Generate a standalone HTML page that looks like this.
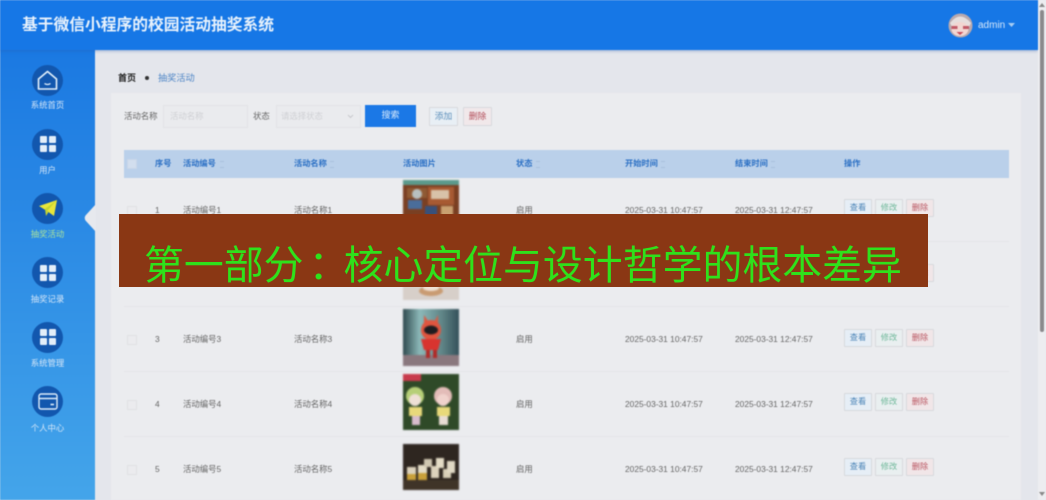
<!DOCTYPE html>
<html lang="zh-CN"><head><meta charset="utf-8"><title>抽奖活动</title>
<style>
html,body{margin:0;padding:0;width:1046px;height:500px;overflow:hidden;background:#e4e6ec}
body{position:relative;font-family:"Liberation Sans","Noto Sans CJK SC",sans-serif;font-size:8.4px;color:#666}
#wrap div,#wrap svg{position:absolute;white-space:nowrap}
#wrap{position:absolute;left:0;top:0;width:1046px;height:500px}
.soft{position:absolute;left:0;top:0;width:1046px;height:500px;filter:blur(.5px)}
.ci{left:32px;width:31px;height:31px;border-radius:50%;background:#1257ae}
.sl{left:0;width:95px;text-align:center;color:#d4e6f8;font-size:8.4px;line-height:12px}
.th{top:158px;color:#2a6fc4;font-weight:bold;font-size:8.2px;line-height:12px}
.t{line-height:12px;color:#666}
.cb{left:127px;width:8px;height:8px;border:1px solid #e0e1e4;background:#ebebee}
.b{width:26px;height:16px;line-height:16px;border:1px solid #d8d9dd;text-align:center;font-size:8.2px;border-radius:1px}
.v{left:844px;color:#4d86b8;background:#e6eef6}.e{left:875px;color:#6fb89a;background:#e9eff0}.d{left:906px;color:#b8525e;background:#f1e6e8}
.ln{left:124px;width:885px;height:1px;background:#e4e5e8}
.sort{width:4px;height:7px;border-top:1px solid #a9c0dc;border-bottom:1px solid #a9c0dc;box-sizing:border-box}
.im{filter:blur(.8px)}
</style></head><body><div id="wrap"><div class="soft">
<div style="left:95px;top:50px;width:951px;height:450px;background:#e4e6ec"></div>
<div style="left:0;top:50px;width:95px;height:450px;background:linear-gradient(#1b79e2,#44a5ea)"></div>
<div style="left:0;top:0;width:1038px;height:50px;background:#1677e6;box-shadow:0 1px 3px rgba(40,90,170,.4)"></div>
<div style="left:22px;top:14.500px;font-size:15.75px;line-height:22px;font-weight:bold;color:#e8f2fc">基于微信小程序的校园活动抽奖系统</div>
<svg style="left:948px;top:13px" width="25" height="25" viewBox="0 0 25 25"><circle cx="12.5" cy="12.5" r="12" fill="#b9a9ae"/><path d="M2 10Q12-3 23 10L21 14H4Z" fill="#e6dedd"/><ellipse cx="12" cy="16" rx="8.500" ry="7" fill="#f2d6d2"/><rect x="3.500" y="13" width="6" height="3" fill="#c25a68"/><rect x="15" y="13" width="6" height="3" fill="#c25a68"/><path d="M8.500 19h7l-3.500 3z" fill="#c84a58"/></svg>
<div style="left:978px;top:19px;font-size:10px;line-height:13px;color:#d5e7fa">admin</div>
<svg style="left:1008px;top:23px" width="7" height="5"><path d="M0 0H7L3.500 4Z" fill="#a8cdf2"/></svg>
<div style="left:1038px;top:0;width:8px;height:500px;background:#ededf0"></div>
<div style="left:1040px;top:10px;width:3.500px;height:322px;background:#8a8a8c;border-radius:2px"></div>
<svg style="left:1039px;top:3px" width="6" height="4"><path d="M3 0L6 4H0Z" fill="#888"/></svg>
<svg style="left:1039px;top:492px" width="6" height="4"><path d="M3 4L6 0H0Z" fill="#888"/></svg>

<div class="ci" style="top:65px"></div>
<svg style="left:37px;top:70px" width="21" height="21" viewBox="0 0 21 21" fill="none" stroke="#e3f1fc" stroke-width="1.600"><path d="M1.500 9L10.500 1.500 19.500 9V19H1.500Z" stroke-linejoin="round"/><path d="M7.500 13.500Q10.500 15.500 13.500 13.500" stroke-width="1.300"/></svg>
<div class="sl" style="top:99px">系统首页</div>
<div class="ci" style="top:129px"></div>
<svg style="left:40px;top:136px" width="16" height="16"><rect width="7" height="7" rx="1" fill="#e3eef9"/><rect x="9" width="7" height="7" rx="1" fill="#e3eef9"/><rect y="9" width="7" height="7" rx="1" fill="#e3eef9"/><rect x="9" y="9" width="7" height="7" rx="1" fill="#e3eef9"/></svg>
<div class="sl" style="top:164px">用户</div>
<div class="ci" style="top:193px"></div>
<svg style="left:38px;top:199px" width="20" height="19" viewBox="0 0 20 19"><path d="M1 7L19 1 16 17 9 12Z" fill="#e8e63a"/><path d="M9 12L19 1 7 10 8 17 10.500 13Z" fill="#c5d430"/></svg>
<div class="sl" style="top:228px;color:#a9e39c">抽奖活动</div>
<div class="ci" style="top:257px"></div>
<svg style="left:40px;top:265px" width="16" height="16"><rect width="7" height="7" rx="1" fill="#e3eef9"/><rect x="9" width="7" height="7" rx="1" fill="#e3eef9"/><rect y="9" width="7" height="7" rx="1" fill="#e3eef9"/><rect x="9" y="9" width="7" height="7" rx="1" fill="#e3eef9"/></svg>
<div class="sl" style="top:293px">抽奖记录</div>
<div class="ci" style="top:322px"></div>
<svg style="left:40px;top:329px" width="16" height="16"><rect width="7" height="7" rx="1" fill="#e3eef9"/><rect x="9" width="7" height="7" rx="1" fill="#e3eef9"/><rect y="9" width="7" height="7" rx="1" fill="#e3eef9"/><rect x="9" y="9" width="7" height="7" rx="1" fill="#e3eef9"/></svg>
<div class="sl" style="top:357px">系统管理</div>
<div class="ci" style="top:386px"></div>
<svg style="left:38px;top:393px" width="20" height="17" viewBox="0 0 20 17" fill="none" stroke="#dcecfa" stroke-width="1.400"><rect x="1" y="1" width="18" height="15" rx="2"/><path d="M1 5.500H19"/><path d="M12.500 11.500H16" stroke-width="1.600"/></svg>
<div class="sl" style="top:422px">个人中心</div>
<svg style="left:84px;top:204px" width="12" height="28"><path d="M12 0V28L1.500 16.500Q0 14 1.500 11.500Z" fill="#e7e9ee"/></svg>

<div style="left:118px;top:72px;font-size:9px;line-height:12px;font-weight:bold;color:#222">首页</div>
<div style="left:145px;top:76px;width:4px;height:4px;border-radius:50%;background:#333"></div>
<div style="left:158px;top:72px;font-size:9.2px;line-height:12px;color:#4f86c6">抽奖活动</div>

<div style="left:111px;top:93px;width:910px;height:407px;background:#ebecef"></div>
<div class="t" style="left:124px;top:110px">活动名称</div>
<div style="left:163px;top:105px;width:83px;height:21px;border:1px solid #e2e3e6;background:#eaebee"></div>
<div class="t" style="left:170px;top:110px;color:#cfd0d4">活动名称</div>
<div class="t" style="left:253px;top:110px">状态</div>
<div style="left:276px;top:105px;width:83px;height:21px;border:1px solid #e2e3e6;background:#eaebee"></div>
<div class="t" style="left:281px;top:110px;color:#cfd0d4">请选择状态</div>
<svg style="left:347px;top:114px" width="7" height="5" fill="none" stroke="#c8c9cd"><path d="M1 1L3.500 3.500 6 1"/></svg>
<div style="left:365px;top:105px;width:51px;height:22px;line-height:21px;text-align:center;background:#1b78e6;color:#d9ebfc;font-size:9px">搜索</div>
<div class="b" style="left:429px;top:107px;width:27px;height:17px;line-height:17px;font-size:8.800px;color:#5c8fbb;background:#e8eff5">添加</div>
<div class="b" style="left:463px;top:107px;width:27px;height:17px;line-height:17px;font-size:8.800px;color:#b4505c;background:#f1e8ea">删除</div>

<div style="left:124px;top:150px;width:885px;height:28px;background:#bad0ea"></div>
<div class="cb" style="top:159px;background:#d2deee;border-color:#c8d6e8"></div>
<div class="th" style="left:155px">序号</div>
<div class="th" style="left:183px">活动编号</div><div class="sort" style="left:220px;top:161px"></div>
<div class="th" style="left:294px">活动名称</div><div class="sort" style="left:330px;top:161px"></div>
<div class="th" style="left:403px">活动图片</div>
<div class="th" style="left:516px">状态</div><div class="sort" style="left:536px;top:161px"></div>
<div class="th" style="left:625px">开始时间</div><div class="sort" style="left:661px;top:161px"></div>
<div class="th" style="left:735px">结束时间</div><div class="sort" style="left:771px;top:161px"></div>
<div class="th" style="left:844px">操作</div>

<div class="ln" style="top:241px"></div><div class="ln" style="top:306px"></div><div class="ln" style="top:371px"></div><div class="ln" style="top:436px"></div>

<!-- row 1 -->
<div class="cb" style="top:206px"></div><div class="t" style="left:155px;top:204px">1</div><div class="t" style="left:183px;top:204px">活动编号1</div><div class="t" style="left:294px;top:204px">活动名称1</div>
<svg class="im" style="left:403px;top:180px" width="56" height="56" viewBox="0 0 56 56"><rect width="56" height="56" fill="#7a3f22"/><rect width="56" height="5" fill="#5b9a8c"/><rect x="4" y="8" width="20" height="10" fill="#8f5a34"/><circle cx="14" cy="14" r="5" fill="#b8c0c0"/><rect x="25" y="7" width="26" height="18" fill="#a75a32"/><rect x="28" y="10" width="18" height="9" fill="#d8c2a8"/><rect x="5" y="20" width="14" height="9" fill="#4a6d9a"/><rect x="22" y="26" width="12" height="12" fill="#38507a"/><rect x="38" y="26" width="12" height="10" fill="#c9a070"/></svg>
<div class="t" style="left:516px;top:204px">启用</div><div class="t" style="left:625px;top:204px">2025-03-31 10:47:57</div><div class="t" style="left:735px;top:204px">2025-03-31 12:47:57</div>
<div class="b v" style="top:199px">查看</div><div class="b e" style="top:199px">修改</div><div class="b d" style="top:199px">删除</div>

<!-- row 2 -->
<svg class="im" style="left:403px;top:244px" width="56" height="56" viewBox="0 0 56 56"><rect width="56" height="56" fill="#d7cfc9"/><ellipse cx="28" cy="47" rx="12" ry="5" fill="#c99b72"/><ellipse cx="28" cy="44" rx="8" ry="3" fill="#efe1d4"/></svg>
<div class="b v" style="top:264px">查看</div><div class="b e" style="top:264px">修改</div><div class="b d" style="top:264px">删除</div>

<!-- row 3 -->
<div class="cb" style="top:335px"></div><div class="t" style="left:155px;top:333px">3</div><div class="t" style="left:183px;top:333px">活动编号3</div><div class="t" style="left:294px;top:333px">活动名称3</div>
<svg class="im" style="left:403px;top:309px" width="56" height="57" viewBox="0 0 56 57"><defs><linearGradient id="g3" x1="0" y1="0" x2="1" y2="0"><stop offset="0" stop-color="#2f4a4e"/><stop offset=".3" stop-color="#8cb8b8"/><stop offset=".7" stop-color="#5f8486"/><stop offset="1" stop-color="#34505a"/></linearGradient></defs><rect width="56" height="57" fill="url(#g3)"/><rect y="46" width="56" height="11" fill="#8a787e"/><path d="M21 16L21 6 26 13H31L35 6 35 16Z" fill="#d85c44"/><circle cx="28" cy="21" r="10" fill="#e0553f"/><ellipse cx="28" cy="21" rx="7" ry="4.500" fill="#1e1c20"/><path d="M18 30H38L35 41H21Z" fill="#d8342f"/><rect x="23" y="41" width="4" height="8" fill="#b02a28"/><rect x="30" y="41" width="4" height="8" fill="#b02a28"/></svg>
<div class="t" style="left:516px;top:333px">启用</div><div class="t" style="left:625px;top:333px">2025-03-31 10:47:57</div><div class="t" style="left:735px;top:333px">2025-03-31 12:47:57</div>
<div class="b v" style="top:329px">查看</div><div class="b e" style="top:329px">修改</div><div class="b d" style="top:329px">删除</div>

<!-- row 4 -->
<div class="cb" style="top:400px"></div><div class="t" style="left:155px;top:398px">4</div><div class="t" style="left:183px;top:398px">活动编号4</div><div class="t" style="left:294px;top:398px">活动名称4</div>
<svg class="im" style="left:403px;top:374px" width="56" height="56" viewBox="0 0 56 56"><rect width="56" height="56" fill="#2f4a28"/><rect x="0" y="0" width="18" height="7" fill="#c83a4c"/><circle cx="12" cy="22" r="9" fill="#b6cf78"/><circle cx="40" cy="22" r="9" fill="#e3bcb8"/><ellipse cx="12" cy="26" rx="6" ry="6" fill="#eee0d6"/><ellipse cx="40" cy="26" rx="6" ry="6" fill="#f0d2cc"/><rect x="6" y="33" width="13" height="9" fill="#e8d97a"/><rect x="34" y="33" width="13" height="9" fill="#e8d97a"/><rect x="9" y="42" width="8" height="9" fill="#d8bccc"/><rect x="36" y="42" width="9" height="9" fill="#e8dcd4"/></svg>
<div class="t" style="left:516px;top:398px">启用</div><div class="t" style="left:625px;top:398px">2025-03-31 10:47:57</div><div class="t" style="left:735px;top:398px">2025-03-31 12:47:57</div>
<div class="b v" style="top:393px">查看</div><div class="b e" style="top:393px">修改</div><div class="b d" style="top:393px">删除</div>

<!-- row 5 -->
<div class="cb" style="top:465px"></div><div class="t" style="left:155px;top:463px">5</div><div class="t" style="left:183px;top:463px">活动编号5</div><div class="t" style="left:294px;top:463px">活动名称5</div>
<svg class="im" style="left:403px;top:444px" width="56" height="46" viewBox="0 0 56 46"><rect width="56" height="46" fill="#2e2620"/><rect y="36" width="56" height="10" fill="#3f3428"/><rect x="4" y="23" width="9" height="12" fill="#dcd2bc"/><rect x="4" y="30" width="9" height="6" fill="#c9a03a"/><rect x="15" y="21" width="9" height="14" fill="#e4dcc6"/><rect x="15" y="29" width="9" height="7" fill="#c9a03a"/><rect x="21" y="15" width="8" height="8" fill="#cfc6b0"/><rect x="28" y="22" width="8" height="12" fill="#dcd2bc"/><rect x="33" y="14" width="8" height="10" fill="#e4dcc6"/><rect x="40" y="25" width="8" height="9" fill="#d8cfb8"/><rect x="44" y="17" width="8" height="12" fill="#e0d8c4"/></svg>
<div class="t" style="left:516px;top:463px">启用</div><div class="t" style="left:625px;top:463px">2025-03-31 10:47:57</div><div class="t" style="left:735px;top:463px">2025-03-31 12:47:57</div>
<div class="b v" style="top:458px">查看</div><div class="b e" style="top:458px">修改</div><div class="b d" style="top:458px">删除</div>
</div>
<!-- banner -->
<div style="left:119px;top:214px;width:809px;height:73px;background:#8a3714"></div>
<div style="left:144px;top:237px;width:780px;font-size:39.9px;line-height:52px;color:#2fe11b;font-family:'Liberation Sans','Noto Sans CJK SC',sans-serif">第一部分<span style="position:relative;left:5px;font-family:'Noto Sans CJK TC',sans-serif">：</span>核心定位与设计哲学的根本差异</div>
</div></body></html>
